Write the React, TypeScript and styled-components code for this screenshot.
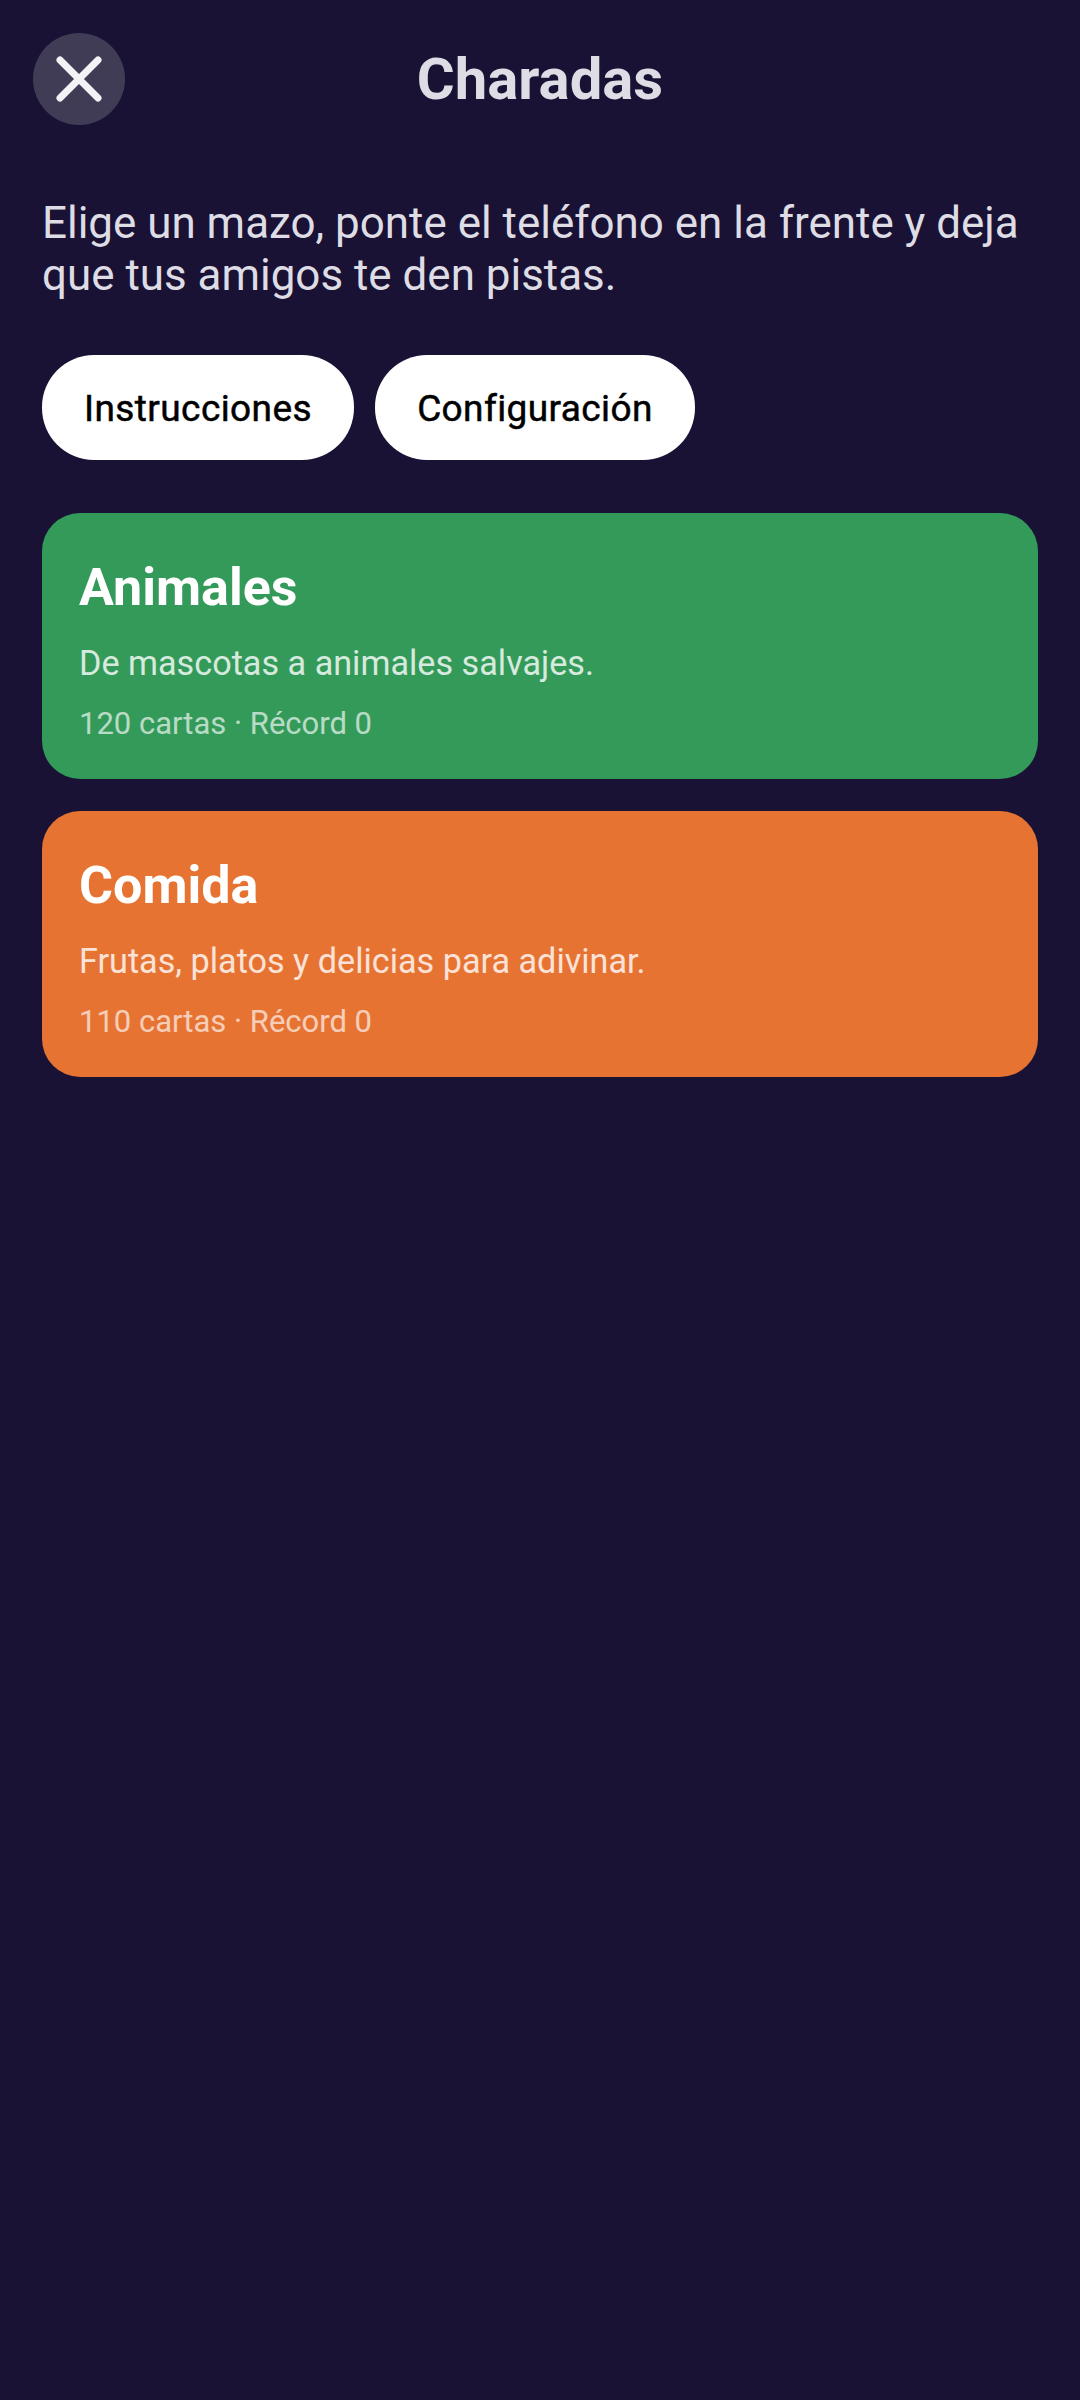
import React from 'react';
import styled, { createGlobalStyle } from 'styled-components';

const GlobalStyle = createGlobalStyle`
  html, body {
    margin: 0;
    padding: 0;
    background: #191234;
  }
`;

const Screen = styled.div`
  width: 1080px;
  height: 2400px;
  overflow: hidden;
  background: #191234;
  font-family: Roboto, sans-serif;
`;

const Header = styled.header`
  position: relative;
  display: flex;
  align-items: center;
  justify-content: center;
  height: 92px;
  margin-top: 33px;
`;

const Title = styled.h1`
  margin: 0;
  font-size: 58px;
  line-height: 64px;
  font-weight: 700;
  color: #dedce4;
`;

const CloseButton = styled.button`
  position: absolute;
  left: 33px;
  top: 0;
  display: flex;
  align-items: center;
  justify-content: center;
  width: 92px;
  height: 92px;
  padding: 0;
  border: none;
  border-radius: 50%;
  background: #413c56;
`;

const Content = styled.main`
  display: flex;
  flex-direction: column;
  padding: 72px 42px 0;
`;

const Lead = styled.p`
  margin: 0;
  font-size: 43.95px;
  line-height: 52px;
  color: #dedce4;
`;

const Actions = styled.div`
  display: flex;
  gap: 21px;
  margin-top: 54px;
`;

const Pill = styled.button`
  width: ${(p: { $width: number }) => p.$width}px;
  height: 105px;
  padding: 2px 0 0;
  border: none;
  border-radius: 52px;
  background: #ffffff;
  color: #000000;
  font-family: inherit;
  font-size: 37px;
  font-weight: 400;
  letter-spacing: 0.4px;
  -webkit-text-stroke: 0.5px #000000;
`;

const DeckList = styled.div`
  display: flex;
  flex-direction: column;
  gap: 32px;
  margin-top: 53px;
`;

const DeckCard = styled.article<{ $color: string }>`
  display: flex;
  flex-direction: column;
  height: 266px;
  box-sizing: border-box;
  padding: 43px 37px 0;
  border-radius: 38px;
  background: ${(p) => p.$color};
  color: #ffffff;
`;

const DeckName = styled.h2`
  margin: 0;
  font-size: 52px;
  line-height: 64px;
  font-weight: 700;
`;

const DeckText = styled.p`
  margin: 20px 0 0;
  font-size: 34.2px;
  line-height: 46px;
  opacity: 0.8;
`;

const DeckMeta = styled.p`
  margin: 16px 0 0;
  font-size: 31px;
  line-height: 44px;
  opacity: 0.65;
`;

const decks = [
  { name: 'Animales', text: 'De mascotas a animales salvajes.', meta: '120 cartas · Récord 0', color: '#339a59' },
  { name: 'Comida', text: 'Frutas, platos y delicias para adivinar.', meta: '110 cartas · Récord 0', color: '#e77333' },
];

export default function App() {
  return (
    <Screen>
      <GlobalStyle />
      <Header>
        <CloseButton aria-label='Cerrar'>
          <svg width='46' height='46' viewBox='0 0 46 46'>
            <path d='M4 4 L42 42 M42 4 L4 42' stroke='#f3f3f5' strokeWidth='7' strokeLinecap='round' />
          </svg>
        </CloseButton>
        <Title>Charadas</Title>
      </Header>
      <Content>
        <Lead>Elige un mazo, ponte el teléfono en la frente y deja que tus amigos te den pistas.</Lead>
        <Actions>
          <Pill $width={312}>Instrucciones</Pill>
          <Pill $width={320}>Configuración</Pill>
        </Actions>
        <DeckList>
          {decks.map((deck) => (
            <DeckCard key={deck.name} $color={deck.color}>
              <DeckName>{deck.name}</DeckName>
              <DeckText>{deck.text}</DeckText>
              <DeckMeta>{deck.meta}</DeckMeta>
            </DeckCard>
          ))}
        </DeckList>
      </Content>
    </Screen>
  );
}
